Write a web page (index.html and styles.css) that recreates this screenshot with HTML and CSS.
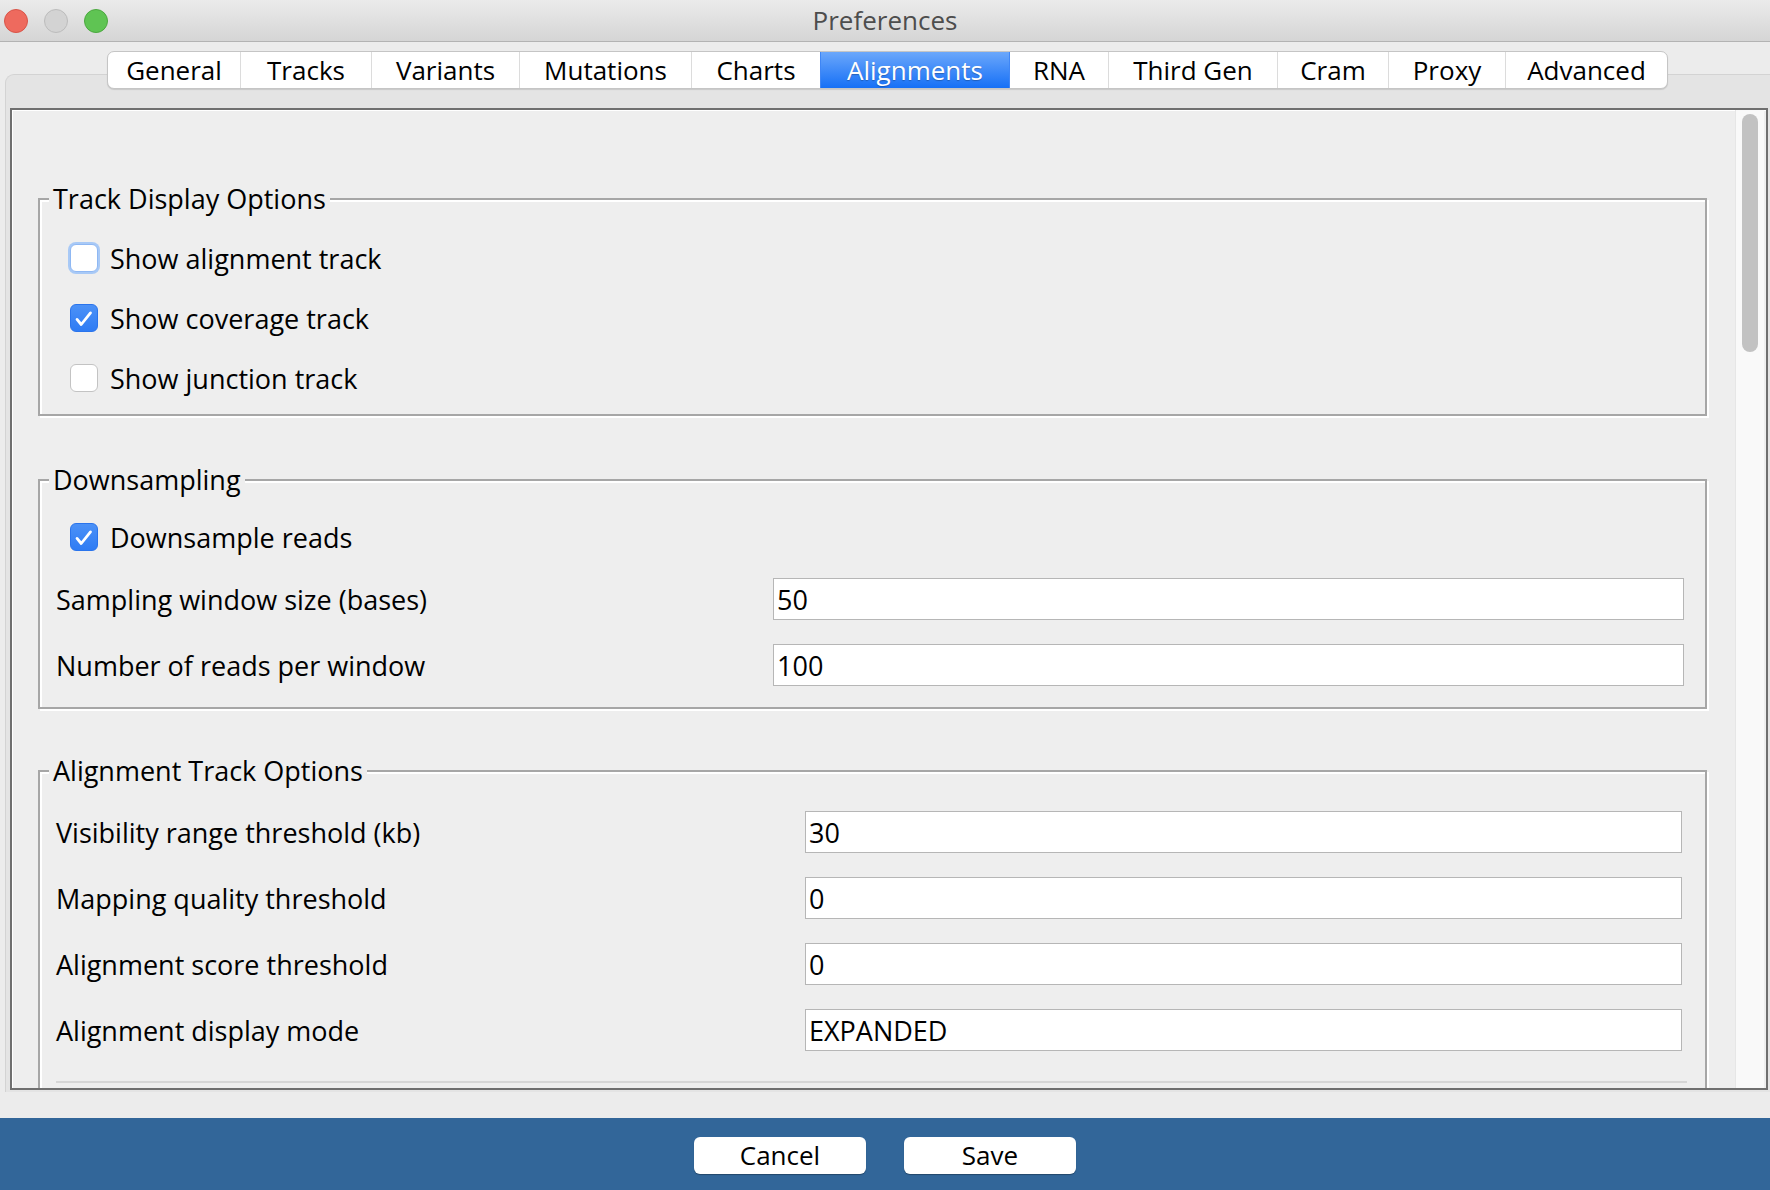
FILE: index.html
```html
<!DOCTYPE html>
<html lang="en">
<head>
<meta charset="utf-8">
<title>Preferences</title>
<link rel="stylesheet" href="styles.css">
</head>
<body>
<div class="titlebar">
  <div class="lights">
    <span class="light red"></span>
    <span class="light idle"></span>
    <span class="light green"></span>
  </div>
  <div class="title">Preferences</div>
  <div></div>
</div>

<div class="tabs">
  <div class="tab">General</div>
  <div class="tab">Tracks</div>
  <div class="tab">Variants</div>
  <div class="tab">Mutations</div>
  <div class="tab">Charts</div>
  <div class="tab active">Alignments</div>
  <div class="tab">RNA</div>
  <div class="tab">Third Gen</div>
  <div class="tab">Cram</div>
  <div class="tab">Proxy</div>
  <div class="tab">Advanced</div>
</div>

<div class="pane">
  <div class="content">
    <div class="scroll">
      <fieldset class="group group-display">
        <legend>Track Display Options</legend>
        <div class="check-row"><span class="box focus"></span><span>Show alignment track</span></div>
        <div class="check-row"><span class="box checked"><svg viewBox="0 0 28 28"><path d="M6.5 15.5 L11 21 L21 8.5" /></svg></span><span>Show coverage track</span></div>
        <div class="check-row"><span class="box"></span><span>Show junction track</span></div>
      </fieldset>

      <fieldset class="group group-down">
        <legend>Downsampling</legend>
        <div class="check-row short"><span class="box checked"><svg viewBox="0 0 28 28"><path d="M6.5 15.5 L11 21 L21 8.5" /></svg></span><span>Downsample reads</span></div>
        <div class="field-row"><span>Sampling window size (bases)</span><div class="field">50</div></div>
        <div class="field-row"><span>Number of reads per window</span><div class="field">100</div></div>
      </fieldset>

      <fieldset class="group group-align">
        <legend>Alignment Track Options</legend>
        <div class="field-row"><span>Visibility range threshold (kb)</span><div class="field">30</div></div>
        <div class="field-row"><span>Mapping quality threshold</span><div class="field">0</div></div>
        <div class="field-row"><span>Alignment score threshold</span><div class="field">0</div></div>
        <div class="field-row"><span>Alignment display mode</span><div class="field">EXPANDED</div></div>
        <div class="separator"></div>
      </fieldset>
    </div>
    <div class="scrollbar"><div class="thumb"></div></div>
  </div>
</div>

<div class="footer">
  <button class="btn">Cancel</button>
  <button class="btn">Save</button>
</div>
</body>
</html>
```

FILE: styles.css
```css
* { box-sizing: border-box; }

html, body {
  margin: 0;
  padding: 0;
}

body {
  width: 1770px;
  height: 1190px;
  overflow: hidden;
  background: #ececec;
  font-family: "Open Sans", "Noto Sans", "DejaVu Sans", sans-serif;
  color: #000;
}

/* ---------- title bar ---------- */
.titlebar {
  height: 42px;
  display: grid;
  grid-template-columns: 1fr auto 1fr;
  align-items: center;
  background: linear-gradient(#ebebeb, #d5d5d5);
  border-bottom: 1px solid #b3b3b3;
}

.lights {
  display: flex;
  gap: 16px;
  padding-left: 4px;
}

.light {
  width: 24px;
  height: 24px;
  border-radius: 50%;
  display: block;
}
.light.red { background: #ee6a5e; border: 1px solid #d85448; }
.light.idle { background: #d3d3d3; border: 1px solid #bcbcbc; }
.light.green { background: #5fc453; border: 1px solid #4ba83f; }

.title {
  font-size: 26px;
  color: #4d4d4d;
  line-height: 41px;
}

/* ---------- tabs ---------- */
.tabs {
  position: relative;
  z-index: 1;
  display: flex;
  width: max-content;
  margin: 9px 0 0 107px;
  height: 38px;
  background: #fff;
  border: 1px solid #c5c5c5;
  border-radius: 7px;
  overflow: hidden;
  box-shadow: 0 1px 1px rgba(0,0,0,0.12);
}

.tab {
  height: 36px;
  line-height: 36px;
  text-align: center;
  font-size: 26px;
  color: #000;
  border-left: 1px solid #dcdcdc;
}
.tab:first-child { border-left: none; width: 132px; }
.tab:nth-child(2) { width: 131px; }
.tab:nth-child(3) { width: 148px; }
.tab:nth-child(4) { width: 172px; }
.tab:nth-child(5) { width: 129px; }
.tab:nth-child(6) { width: 189px; }
.tab:nth-child(7) { width: 99px; }
.tab:nth-child(8) { width: 169px; }
.tab:nth-child(9) { width: 111px; }
.tab:nth-child(10) { width: 117px; }
.tab:nth-child(11) { width: 162px; }

.tab.active {
  background: linear-gradient(#6ba7fb, #1670f6);
  color: #fff;
  border-left-color: #3f86f5;
  text-shadow: 0 1px 1px rgba(0,0,0,0.25);
}
.tab.active + .tab { border-left-color: #3f86f5; }

/* ---------- pane ---------- */
.pane {
  margin: -15px 0 0 5px;
  padding: 33px 2px 2px 4px;
  background: #e4e4e4;
  border: 1px solid #d3d3d3;
  border-right: none;
  border-bottom: none;
  border-radius: 9px 0 0 0;
}

.content {
  height: 982px;
  display: flex;
  background: #eeeeee;
  border: 2px solid #6f6f6f;
  box-shadow: inset 1px 1px 0 #ffffff;
}

.scroll {
  flex: 1;
  overflow: hidden;
  padding: 71px 28px 0 26px;
}

.scrollbar {
  width: 29px;
  margin-right: 2px;
  background: #f9f9f9;
  border-left: 1px solid #e6e6e6;
  padding: 4px 0 0 6px;
}

.thumb {
  width: 16px;
  height: 238px;
  border-radius: 8px;
  background: #c2c2c2;
}

/* ---------- groups ---------- */
.group {
  margin: 0;
  border: 2px solid #a6a6a6;
  box-shadow: 2px 2px 0 #ffffff, inset 2px 2px 0 #ffffff;
  padding: 11px 21px 6px 16px;
  min-inline-size: 0;
}

.group legend {
  font-size: 27px;
  line-height: 36px;
  padding: 0 4px;
  margin-left: -7px;
  background: #eeeeee;
}

.group-down {
  margin-top: 46px;
  padding: 10px 21px 9px 16px;
}

.group-align {
  margin-top: 44px;
  padding: 10px 23px 60px 16px;
}

.check-row {
  height: 60px;
  display: flex;
  align-items: center;
  gap: 12px;
  padding-left: 14px;
  font-size: 27px;
}
.check-row.short { height: 58px; }

.box {
  width: 28px;
  height: 28px;
  border-radius: 6px;
  background: #ffffff;
  border: 1px solid #c3c3c3;
  display: flex;
  align-items: center;
  justify-content: center;
  flex: none;
}

.box.focus {
  border: 1px solid #8fb8f3;
  box-shadow: 0 0 0 2px #a8c9f6;
}

.box.checked {
  background: linear-gradient(#4b91f7, #2f7cf4);
  border: 1px solid #2a74ec;
}

.box svg {
  width: 28px;
  height: 28px;
}
.box svg path {
  fill: none;
  stroke: #ffffff;
  stroke-width: 3;
  stroke-linecap: round;
  stroke-linejoin: round;
}

.field-row {
  height: 66px;
  display: grid;
  align-items: center;
  font-size: 27px;
}
.group-down .field-row { grid-template-columns: 717px 1fr; }
.group-align .field-row { grid-template-columns: 749px 1fr; }

.field {
  height: 42px;
  line-height: 41px;
  background: #ffffff;
  border: 1px solid #b6b6b6;
  padding: 0 3px;
  font-size: 27px;
}

.separator {
  margin: 18px -5px 0 0;
  border-top: 2px solid #d6d6d6;
}

/* ---------- footer ---------- */
.footer {
  margin-top: 26px;
  height: 72px;
  background: #326699;
  display: flex;
  justify-content: center;
  align-items: center;
  gap: 38px;
  padding-top: 2px;
}

.btn {
  width: 172px;
  height: 37px;
  border: none;
  border-radius: 6px;
  background: #ffffff;
  box-shadow: 0 1px 1px rgba(0,0,0,0.3);
  font-family: "Open Sans", "Noto Sans", "DejaVu Sans", sans-serif;
  font-size: 26px;
  line-height: 37px;
  padding: 0;
  color: #000;
}
```
